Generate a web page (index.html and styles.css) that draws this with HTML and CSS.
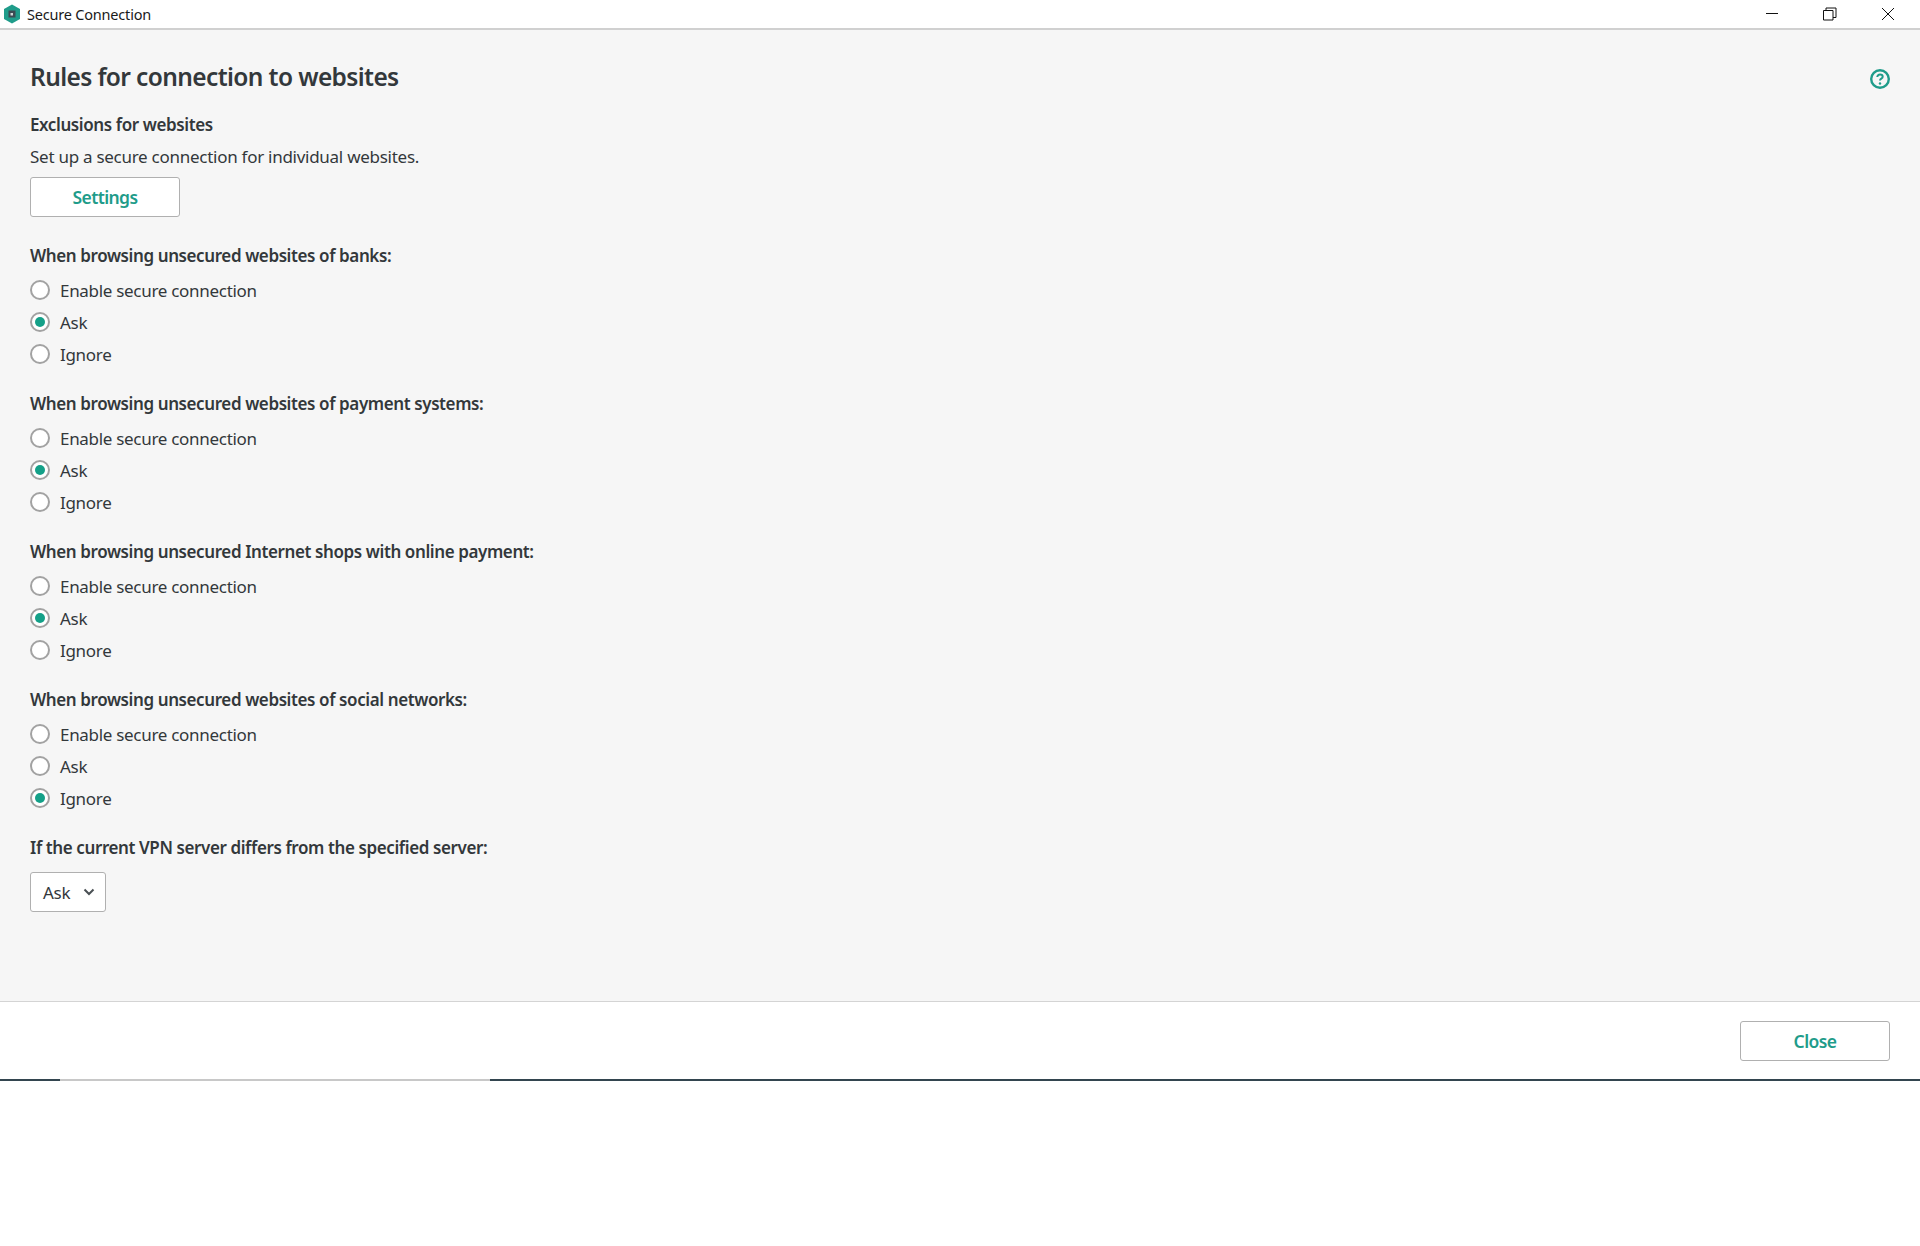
FILE: index.html
```html
<!DOCTYPE html>
<html lang="en">
<head>
<meta charset="utf-8">
<title>Secure Connection</title>
<link rel="stylesheet" href="styles.css">
</head>
<body>
<div class="window">
  <header class="titlebar">
    <svg class="app-icon" viewBox="0 0 18 20" width="18" height="20"><path d="M9 .5 17 5v10l-8 4.5L1 15V5z" fill="#1f9c8a"/><rect x="5.500" y="6.500" width="7" height="7" fill="#3d4a52"/><rect x="7.500" y="9" width="2.500" height="2.500" fill="#cfd8d8"/></svg>
    <span class="app-title">Secure Connection</span>
    <div class="win-controls">
      <svg class="win-btn" viewBox="0 0 14 14" width="14" height="14"><path d="M1 6.500h12" stroke="#111" stroke-width="1" fill="none"/></svg>
      <svg class="win-btn" viewBox="0 0 14 14" width="14" height="14"><path d="M.5 3.500h9.500v9.500H.5zM3 3.500V1h10v9.500h-3" stroke="#111" stroke-width="1" fill="none"/></svg>
      <svg class="win-btn" viewBox="0 0 14 14" width="14" height="14"><path d="M1 1l12 12M13 1 1 13" stroke="#111" stroke-width="1" fill="none"/></svg>
    </div>
  </header>
  <main class="content">
    <div class="head-row">
      <h1 class="page-title">Rules for connection to websites</h1>
      <svg class="help" viewBox="0 0 20 20" width="20" height="20"><circle cx="10" cy="10" r="8.800" fill="none" stroke="#1f9c8a" stroke-width="2.400"/><path d="M7.300 8c0-1.600 1.200-2.500 2.700-2.500s2.700.9 2.700 2.300c0 1.900-2.700 1.800-2.700 3.600" fill="none" stroke="#1f9c8a" stroke-width="2"/><circle cx="10" cy="14.500" r="1.200" fill="#1f9c8a"/></svg>
    </div>
    <section class="exclusions">
      <h2 class="label">Exclusions for websites</h2>
      <p class="desc">Set up a secure connection for individual websites.</p>
      <button class="btn" type="button">Settings</button>
    </section>
    <section class="group">
      <h2 class="label">When browsing unsecured websites of banks:</h2>
      <div class="option"><span class="radio"></span>Enable secure connection</div>
      <div class="option"><span class="radio on"></span>Ask</div>
      <div class="option"><span class="radio"></span>Ignore</div>
    </section>
    <section class="group">
      <h2 class="label">When browsing unsecured websites of payment systems:</h2>
      <div class="option"><span class="radio"></span>Enable secure connection</div>
      <div class="option"><span class="radio on"></span>Ask</div>
      <div class="option"><span class="radio"></span>Ignore</div>
    </section>
    <section class="group">
      <h2 class="label">When browsing unsecured Internet shops with online payment:</h2>
      <div class="option"><span class="radio"></span>Enable secure connection</div>
      <div class="option"><span class="radio on"></span>Ask</div>
      <div class="option"><span class="radio"></span>Ignore</div>
    </section>
    <section class="group">
      <h2 class="label">When browsing unsecured websites of social networks:</h2>
      <div class="option"><span class="radio"></span>Enable secure connection</div>
      <div class="option"><span class="radio"></span>Ask</div>
      <div class="option"><span class="radio on"></span>Ignore</div>
    </section>
    <section class="group">
      <h2 class="label">If the current VPN server differs from the specified server:</h2>
      <div class="select">Ask<svg viewBox="0 0 12 8" width="12" height="8"><path d="M1.500 1.500 6 6l4.500-4.500" fill="none" stroke="#4a5054" stroke-width="2"/></svg></div>
    </section>
  </main>
  <footer class="footer"><button class="btn" type="button">Close</button></footer>
  <div class="edge"><span class="edge-dark edge-start"></span><span class="edge-light"></span><span class="edge-dark edge-rest"></span></div>
</div>
</body>
</html>
```
FILE: styles.css
```css
* { box-sizing: border-box; }
html, body { margin: 0; height: 100%; background: #fff; }
body { font-family: "Noto Sans", "Open Sans", sans-serif; color: #33383b; }
.window { display: flex; flex-direction: column; width: 1920px; }
.titlebar { height: 30px; display: flex; align-items: center; padding-left: 3px; background: #fff; border-bottom: 2px solid #d0d0d0; }
.app-icon { margin-right: 6px; }
.app-title { font-size: 14.500px; letter-spacing: -0.2px; color: #1a1a1a; }
.win-controls { margin-left: auto; display: flex; gap: 44px; padding-right: 25px; }
.win-btn { display: block; }
.content { height: 972px; padding: 0 30px; background: #f6f6f6; border-bottom: 1px solid #d4d4d4; }
.head-row { display: flex; justify-content: space-between; align-items: center; padding-top: 28px; height: 66px; }
.help { margin-top: 4px; }
.page-title { margin: 0; font-size: 24.500px; font-weight: 600; line-height: 36px; letter-spacing: -0.62px; }
.label { margin: 0; font-size: 17px; font-weight: 600; line-height: 24px; letter-spacing: -0.4px; }
.exclusions { margin-top: 17px; }
.desc { margin: 8px 0; font-size: 17px; line-height: 24px; letter-spacing: -0.27px; }
.btn { display: block; width: 150px; height: 40px; padding: 0; background: #fff; border: 1px solid #b0b0b0; border-radius: 3px; color: #1f9c8a; font: 600 17.500px "Noto Sans", sans-serif; letter-spacing: -0.6px; }
.group { margin-top: 22px; }
.exclusions + .group { margin-top: 27px; }
.group .label { margin-bottom: 6px; }
.option { display: flex; align-items: center; gap: 10px; height: 32px; font-size: 17px; letter-spacing: -0.3px; }
.radio { width: 20px; height: 20px; border: 2px solid #a2a2a2; border-radius: 50%; background: #fff; display: flex; align-items: center; justify-content: center; }
.radio.on::after { content: ""; width: 10px; height: 10px; border-radius: 50%; background: #14a088; }
.select { margin-top: 12px; width: 76px; height: 40px; display: flex; align-items: center; justify-content: space-between; padding: 0 10px 0 12px; background: #fff; border: 1px solid #b0b0b0; border-radius: 3px; font-size: 17px; letter-spacing: -0.28px; }
.footer { height: 77px; padding: 19px 30px 0 0; display: flex; justify-content: flex-end; background: #fff; }
.edge { display: flex; height: 2px; }
.edge-dark { background: #33454f; }
.edge-start { width: 60px; }
.edge-light { width: 430px; background: #c8c8c8; }
.edge-rest { flex: 1; }
```
